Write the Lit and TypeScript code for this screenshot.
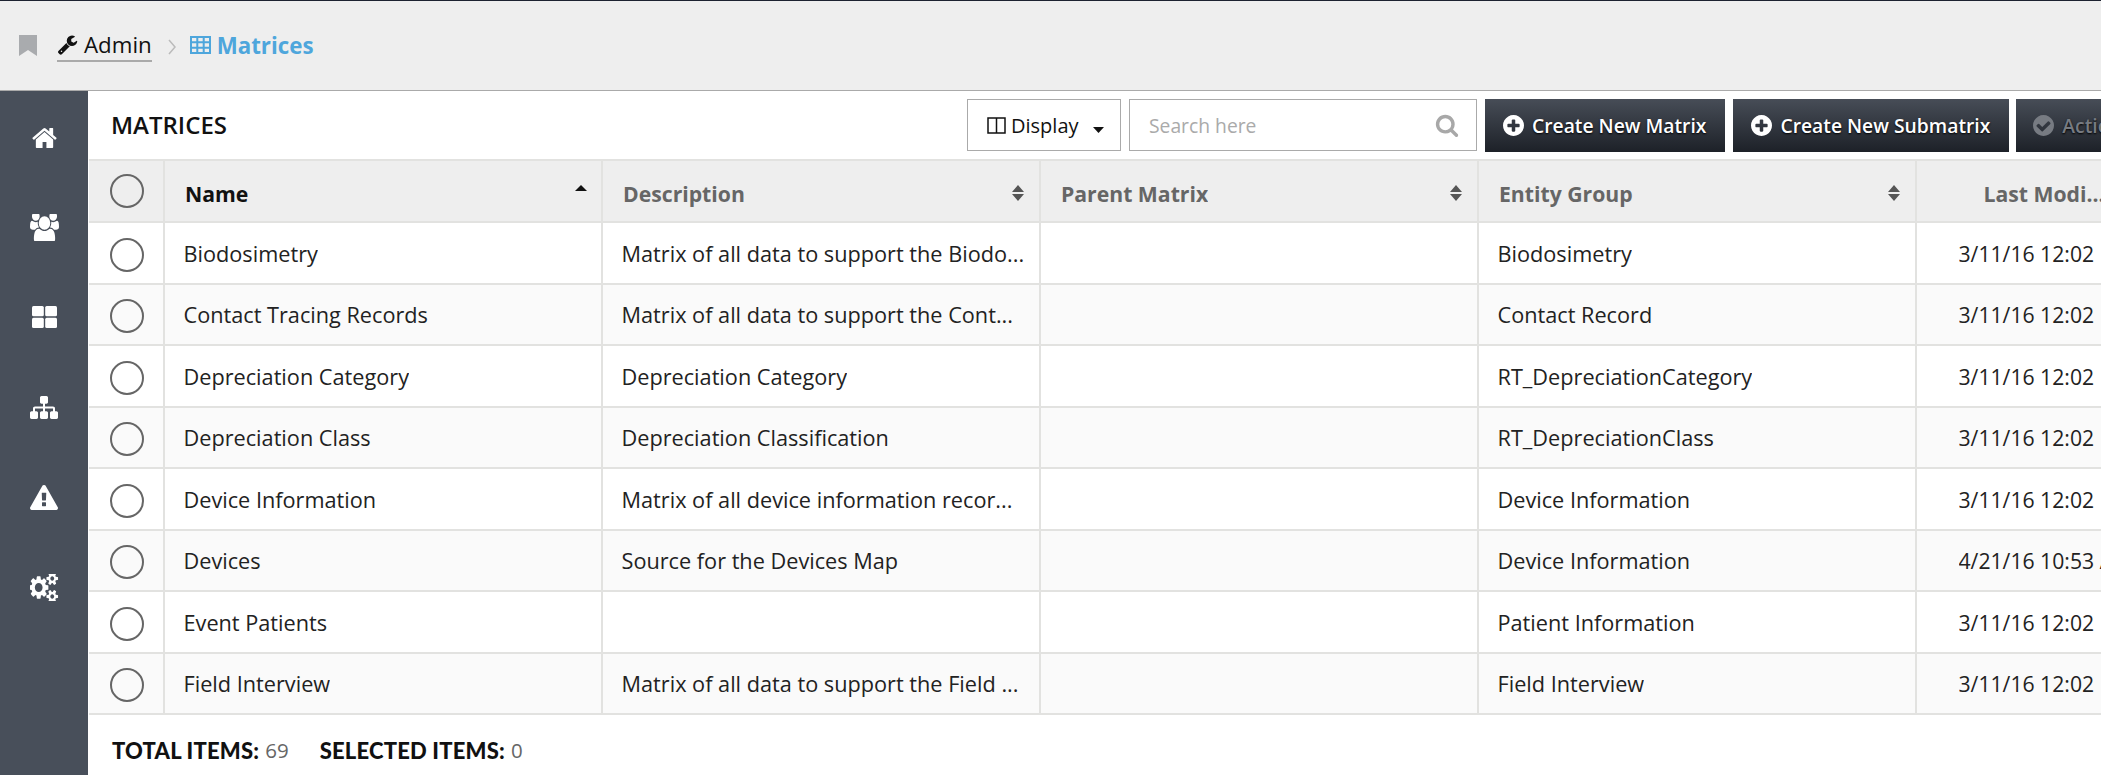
import { LitElement, css, html, svg } from "lit";
import { customElement } from "lit/decorators.js";

type Row = { name: string; desc: string; group: string; modified: string };

const ROWS: Row[] = [
	{ name: "Biodosimetry", desc: "Matrix of all data to support the Biodo...", group: "Biodosimetry", modified: "3/11/16 12:02 PM" },
	{ name: "Contact Tracing Records", desc: "Matrix of all data to support the Cont...", group: "Contact Record", modified: "3/11/16 12:02 PM" },
	{ name: "Depreciation Category", desc: "Depreciation Category", group: "RT_DepreciationCategory", modified: "3/11/16 12:02 PM" },
	{ name: "Depreciation Class", desc: "Depreciation Classification", group: "RT_DepreciationClass", modified: "3/11/16 12:02 PM" },
	{ name: "Device Information", desc: "Matrix of all device information recor...", group: "Device Information", modified: "3/11/16 12:02 PM" },
	{ name: "Devices", desc: "Source for the Devices Map", group: "Device Information", modified: "4/21/16 10:53 AM" },
	{ name: "Event Patients", desc: "", group: "Patient Information", modified: "3/11/16 12:02 PM" },
	{ name: "Field Interview", desc: "Matrix of all data to support the Field ...", group: "Field Interview", modified: "3/11/16 12:02 PM" },
];

const fa = (d: string) => svg`<path d=${d}></path>`;

const WRENCH = fa("M448 1472q0-26-19-45t-45-19-45 19-19 45 19 45 45 19 45-19 19-45zm644-420l-682 682q-37 37-90 37-52 0-91-37l-106-108q-38-36-38-90 0-53 38-91l681-681q39 98 114.500 173.500t173.500 114.500zm634-435q0 39-23 106-47 134-164.500 217.500t-258.500 83.500q-185 0-316.500-131.500t-131.500-316.500 131.500-316.500 316.500-131.500q58 0 121.500 16.500t107.500 46.500q16 11 16 28t-16 28l-293 169v224l193 107q5-3 79-48.500t135.500-81 70.500-35.500q15 0 23.500 10t8.500 25z");
const SEARCH = fa("M1216 832q0-185-131.500-316.500t-316.500-131.500-316.500 131.500-131.500 316.500 131.500 316.500 316.500 131.500 316.500-131.500 131.500-316.500zm512 832q0 52-38 90t-90 38q-54 0-90-38l-343-342q-179 124-399 124-143 0-273.500-55.500t-225-150-150-225-55.500-273.500 55.500-273.500 150-225 225-150 273.500-55.500 273.500 55.500 225 150 150 225 55.500 273.500q0 220-124 399l343 343q37 37 37 90z");
const PLUS = fa("M1344 960v-128q0-26-19-45t-45-19h-256v-256q0-26-19-45t-45-19h-128q-26 0-45 19t-19 45v256h-256q-26 0-45 19t-19 45v128q0 26 19 45t45 19h256v256q0 26 19 45t45 19h128q26 0 45-19t19-45v-256h256q26 0 45-19t19-45zm320-64q0 209-103 385.500t-279.500 279.500-385.500 103-385.500-103-279.500-279.500-103-385.500 103-385.500 279.500-279.500 385.500-103 385.500 103 279.500 279.500 103 385.500z");
const CHECK = fa("M1412 734q0-28-18-46l-91-90q-19-19-45-19t-45 19l-408 407-226-226q-19-19-45-19t-45 19l-91 90q-18 18-18 46 0 27 18 45l362 362q19 19 45 19 27 0 46-19l543-543q18-18 18-45zm252 162q0 209-103 385.500t-279.500 279.500-385.500 103-385.500-103-279.500-279.500-103-385.500 103-385.500 279.500-279.500 385.500-103 385.500 103 279.500 279.500 103 385.500z");
const HOME = fa("M1472 992v480q0 26-19 45t-45 19h-384v-384h-256v384h-384q-26 0-45-19t-19-45v-480q0-1 .5-3t.5-3l575-474 575 474q1 2 1 6zm223-69l-62 74q-8 9-21 11h-3q-13 0-21-7l-692-577-692 577q-12 8-24 7-13-2-21-11l-62-74q-8-10-7-23.500t11-21.500l719-599q32-26 76-26t76 26l244 204v-195q0-14 9-23t23-9h192q14 0 23 9t9 23v408l219 182q10 8 11 21.500t-7 23.500z");
const USERS = fa("M593 896q-162 5-265 128h-134q-82 0-138-40.500t-56-118.500q0-353 124-353 6 0 43.500 21t97.500 42.500 119 21.500q67 0 133-23-5 37-5 66 0 139 81 256zm1071 637q0 120-73 189.500t-194 69.500h-874q-121 0-194-69.500t-73-189.500q0-53 3.500-103.500t14-109 26.500-108.500 43-97.500 62-81 85.500-53.500 111.500-20q10 0 43 21.500t73 48 107 48 135 21.500 135-21.500 107-48 73-48 43-21.500q61 0 111.500 20t85.500 53.500 62 81 43 97.500 26.500 108.500 14 109 3.500 103.500zm-1024-1277q0 106-75 181t-181 75-181-75-75-181 75-181 181-75 181 75 75 181zm704 384q0 159-112.500 271.500t-271.500 112.500-271.500-112.500-112.500-271.500 112.500-271.500 271.500-112.500 271.500 112.500 112.500 271.500zm576 225q0 78-56 118.500t-138 40.500h-134q-103-123-265-128 81-117 81-256 0-29-5-66 66 23 133 23 59 0 119-21.500t97.500-42.500 43.500-21q124 0 124 353zm-128-609q0 106-75 181t-181 75-181-75-75-181 75-181 181-75 181 75 75 181z");
const SITEMAP = fa("M1792 1248v320q0 40-28 68t-68 28h-320q-40 0-68-28t-28-68v-320q0-40 28-68t68-28h96v-192h-512v192h96q40 0 68 28t28 68v320q0 40-28 68t-68 28h-320q-40 0-68-28t-28-68v-320q0-40 28-68t68-28h96v-192h-512v192h96q40 0 68 28t28 68v320q0 40-28 68t-68 28h-320q-40 0-68-28t-28-68v-320q0-40 28-68t68-28h96v-192q0-52 38-90t90-38h512v-192h-96q-40 0-68-28t-28-68v-320q0-40 28-68t68-28h320q40 0 68 28t28 68v320q0 40-28 68t-68 28h-96v192h512q52 0 90 38t38 90v192h96q40 0 68 28t28 68z");
const WARNING = fa("M1024 1375v-190q0-14-9.500-23.500t-22.500-9.500h-192q-13 0-22.500 9.500t-9.500 23.500v190q0 14 9.500 23.500t22.500 9.500h192q13 0 22.500-9.500t9.500-23.500zm-2-374l18-459q0-12-10-19-13-11-24-11h-220q-11 0-24 11-10 7-10 21l17 457q0 10 10 16.500t24 6.500h185q14 0 23.500-6.500t10.500-16.500zm-14-934l768 1408q35 63-2 126-17 29-46.500 46t-63.500 17h-1536q-34 0-63.500-17t-46.500-46q-37-63-2-126l768-1408q17-31 47-49t65-18 65 18 47 49z");
const COGS = fa("M832 896q0-106-75-181t-181-75-181 75-75 181 75 181 181 75 181-75 75-181zm768 512q0-52-38-90t-90-38-90 38-38 90q0 53 37.500 90.500t90.500 37.500 90.500-37.500 37.500-90.500zm0-1024q0-52-38-90t-90-38-90 38-38 90q0 53 37.500 90.500t90.500 37.500 90.500-37.500 37.500-90.500zm-384 421v185q0 10-7 19.500t-16 10.500l-155 24q-11 35-32 76 34 48 90 115 7 11 7 20 0 12-7 19-23 30-82.500 89.500t-78.500 59.500q-11 0-21-7l-115-90q-37 19-77 31-11 108-23 155-7 24-30 24h-186q-11 0-20-7.500t-10-17.500l-23-153q-34-10-75-31l-118 89q-7 7-20 7-11 0-21-8-144-133-144-160 0-9 7-19 10-14 41-53t47-61q-23-44-35-82l-152-24q-10-1-17-9.500t-7-19.500v-185q0-10 7-19.500t16-10.500l155-24q11-35 32-76-34-48-90-115-7-11-7-20 0-12 7-20 22-30 82-89t79-59q11 0 21 7l115 90q34-18 77-32 11-108 23-154 7-24 30-24h186q11 0 20 7.500t10 17.500l23 153q34 10 75 31l118-89q8-7 20-7 11 0 21 8 144 133 144 160 0 8-7 19-12 16-42 54t-45 60q23 48 34 82l152 23q10 2 17 10.500t7 19.500zm640 533v140q0 16-149 31-12 27-30 52 51 113 51 138 0 4-4 7-122 71-124 71-8 0-46-47t-52-68q-20 2-30 2t-30-2q-14 21-52 68t-46 47q-2 0-124-71-4-3-4-7 0-25 51-138-18-25-30-52-149-15-149-31v-140q0-16 149-31 13-29 30-52-51-113-51-138 0-4 4-7 4-2 35-20t59-34 30-16q8 0 46 46.500t52 67.500q20-2 30-2t30 2q51-71 92-112l6-2q4 0 124 70 4 3 4 7 0 25-51 138 17 23 30 52 149 15 149 31zm0-1024v140q0 16-149 31-12 27-30 52 51 113 51 138 0 4-4 7-122 71-124 71-8 0-46-47t-52-68q-20 2-30 2t-30-2q-14 21-52 68t-46 47q-2 0-124-71-4-3-4-7 0-25 51-138-18-25-30-52-149-15-149-31v-140q0-16 149-31 13-29 30-52-51-113-51-138 0-4 4-7 4-2 35-20t59-34 30-16q8 0 46 46.500t52 67.500q20-2 30-2t30 2q51-71 92-112l6-2q4 0 124 70 4 3 4 7 0 25-51 138 17 23 30 52 149 15 149 31z");

const NAV = [
	html`<svg width="25" height="21" viewBox="64 190 1664 1346" preserveAspectRatio="none" fill="currentColor">${HOME}</svg>`,
	html`<svg width="29" height="27" viewBox="0 128 1920 1536" preserveAspectRatio="none" fill="currentColor">${USERS}</svg>`,
	html`<svg width="25" height="22" viewBox="0 0 25 22" fill="currentColor">
		<rect width="11.800" height="10.300" rx="1.500"/><rect x="13.200" width="11.800" height="10.300" rx="1.500"/>
		<rect y="11.700" width="11.800" height="10.300" rx="1.500"/><rect x="13.200" y="11.700" width="11.800" height="10.300" rx="1.500"/>
	</svg>`,
	html`<svg width="28" height="23" viewBox="0 128 1792 1536" preserveAspectRatio="none" fill="currentColor">${SITEMAP}</svg>`,
	html`<svg width="28" height="25" viewBox="0 0 1792 1664" preserveAspectRatio="none" fill="currentColor">${WARNING}</svg>`,
	html`<svg width="29" height="27" viewBox="0 128 1920 1536" preserveAspectRatio="none" fill="currentColor">${COGS}</svg>`,
];

@customElement("app-root")
export class AppRoot extends LitElement {
	static override styles = css`
		:host {
			display: block;
			width: 2101px;
			height: 775px;
			overflow: hidden;
			background: #fff;
			font-family: "Open Sans", sans-serif;
			color: #222;
		}

		.crumbs {
			height: 88px;
			box-sizing: content-box;
			background: #eee;
			border-top: 1px solid #1c2230;
			border-bottom: 1px solid #aaa;
			display: flex;
			align-items: center;
			padding: 0 0 1px 19px;
			font-size: 22.300px;
		}
		.bookmark { color: #a9abae; margin-right: 20px; display: block; }
		.admin {
			display: flex;
			align-items: center;
			gap: 6px;
			color: #111;
			height: 30px;
			border-bottom: 2px solid #aaa;
			margin-top: 1px;
		}
		.chev { margin: 3px 14px 0 16px; color: #bbb; display: block; }
		.current { display: flex; align-items: center; gap: 6px; color: #4ea6dc; font-weight: 700; }

		.body { display: flex; height: 684px; }
		.side { width: 88px; flex: none; background: #484f5a; color: #fff; padding-top: 1px; box-sizing: border-box; }
		.side a { height: 90px; display: flex; align-items: center; justify-content: center; }

		.main { flex: 1; min-width: 0; padding-left: 1px; overflow: hidden; }
		.toolbar { height: 68px; display: flex; align-items: center; white-space: nowrap; padding-left: 22px; }
		.title { width: 856px; flex: none; font-size: 24px; font-weight: 600; color: #111; margin-top: -2px; }
		.display {
			width: 154px;
			height: 52px;
			box-sizing: border-box;
			flex: none;
			border: 1px solid #aaa;
			display: flex;
			align-items: center;
			padding-left: 19px;
			font-size: 20px;
			color: #111;
		}
		.display .col { margin-right: 5px; display: block; }
		.display .caret { margin: 9px 0 0 14px; display: block; }
		.search {
			width: 348px;
			height: 52px;
			box-sizing: border-box;
			flex: none;
			margin-left: 8px;
			border: 1px solid #aaa;
			display: flex;
			align-items: center;
			justify-content: space-between;
			padding: 0 17px 0 19px;
			font-size: 19.300px;
			color: #aaa;
		}
		.search svg { color: #a8a8a8; display: block; }
		.btn {
			height: 53px;
			box-sizing: border-box;
			flex: none;
			margin-left: 8px;
			display: flex;
			align-items: center;
			gap: 8px;
			padding: 0 19px 0 18px;
			background: linear-gradient(#474d57, #1d2128);
			color: #fff;
			font-size: 19.300px;
			font-weight: 600;
			text-shadow: 0 1px 2px #000;
		}
		.btn svg { display: block; }
		.btn.off { color: #777b82; padding-left: 17px; width: 150px; margin-left: 7px; }

		.grid { display: grid; grid-template-columns: 75.500px repeat(4, 438px) 300px; }
		.cell {
			height: 61.500px;
			box-sizing: border-box;
			border-bottom: 2px solid #e2e2e0;
			border-right: 2px solid #e2e2e0;
			display: flex;
			align-items: center;
			padding: 1px 5px 0 19px;
			font-size: 21.700px;
			min-width: 0;
		}
		.cell span { white-space: nowrap; overflow: hidden; }
		.even { background: #fafafa; }
		.cell.check { padding: 4px 0 0 21px; }
		.cell.last { padding-left: 42px; border-right: 0; font-size: 21.200px; }
		.head {
			height: 64px;
			background: #eee;
			border-top: 2px solid #e2e2e0;
			font-weight: 700;
			font-size: 21.200px;
			color: #666;
			justify-content: space-between;
			padding: 4px 14px 0 20.500px;
		}
		.head.check { padding: 0 0 0 21px; }
		.head.last { padding-left: 67px; border-right: 0; }
		.head.active { color: #111; }
		.head svg { display: block; }
		.radio { width: 34px; height: 34px; box-sizing: border-box; border: 2px solid #666; border-radius: 50%; }

		.foot { height: 60px; box-sizing: border-box; padding: 10px 0 0 23px; display: flex; align-items: center; font-size: 20.500px; color: #666; }
		.foot b { color: #111; font-family: Lato, sans-serif; font-size: 22px; font-weight: 900; letter-spacing: 0.200px; margin-right: 6px; }
		.foot .sel { margin-left: 31px; }
	`;

	private sortIcon(active: boolean) {
		return active
			? html`<svg width="12" height="16" viewBox="0 0 12 16"><path fill="#111" d="M6 0l6 6H0z"/></svg>`
			: html`<svg width="14" height="16" viewBox="0 0 14 16"><path fill="#555" d="M7 0l6 7H1zM1 9h12l-6 7z"/></svg>`;
	}

	override render() {
		return html`
			<div class="crumbs">
				<svg class="bookmark" width="18" height="21" viewBox="0 0 18 21"><path fill="currentColor" d="M0 0h18v21l-9-6-9 6z"/></svg>
				<div class="admin">
					<svg width="21" height="21" viewBox="0 0 1792 1792" fill="currentColor">${WRENCH}</svg>
					Admin
				</div>
				<svg class="chev" width="8" height="16" viewBox="0 0 8 16"><path fill="none" stroke="currentColor" stroke-width="1.500" d="M1 1l6 7-6 7"/></svg>
				<div class="current">
					<svg width="21" height="18" viewBox="0 0 21 18"><path fill="none" stroke="currentColor" stroke-width="2" d="M1 1h19v16H1zM1 6.300h19M1 11.700h19M7.300 1v16M13.700 1v16"/></svg>
					Matrices
				</div>
			</div>
			<div class="body">
				<nav class="side">${NAV.map((icon) => html`<a>${icon}</a>`)}</nav>
				<div class="main">
					<div class="toolbar">
						<div class="title">MATRICES</div>
						<div class="display">
							<svg class="col" width="19" height="17" viewBox="0 0 19 17"><path fill="none" stroke="#111" stroke-width="1.500" d="M1 1h17v15H1zM9.500 1v15"/></svg>
							Display
							<svg class="caret" width="11" height="6" viewBox="0 0 11 6"><path fill="#111" d="M0 0h11L5.500 6z"/></svg>
						</div>
						<div class="search">
							Search here
							<svg width="24" height="24" viewBox="0 0 1792 1792" fill="currentColor">${SEARCH}</svg>
						</div>
						<div class="btn">
							<svg width="21" height="21" viewBox="128 128 1536 1536" fill="#fff">${PLUS}</svg>
							Create New Matrix
						</div>
						<div class="btn">
							<svg width="21" height="21" viewBox="128 128 1536 1536" fill="#fff">${PLUS}</svg>
							Create New Submatrix
						</div>
						<div class="btn off">
							<svg width="21" height="21" viewBox="128 128 1536 1536" fill="currentColor">${CHECK}</svg>
							Actions
						</div>
					</div>
					<div class="grid">
						<div class="cell head check"><div class="radio"></div></div>
						<div class="cell head active"><span>Name</span>${this.sortIcon(true)}</div>
						<div class="cell head"><span>Description</span>${this.sortIcon(false)}</div>
						<div class="cell head"><span>Parent Matrix</span>${this.sortIcon(false)}</div>
						<div class="cell head"><span>Entity Group</span>${this.sortIcon(false)}</div>
						<div class="cell head last"><span>Last Modi...</span></div>
						${ROWS.map((r, i) => {
							const z = i % 2 ? "even" : "";
							return html`
								<div class="cell check ${z}"><div class="radio"></div></div>
								<div class="cell ${z}"><span>${r.name}</span></div>
								<div class="cell ${z}"><span>${r.desc}</span></div>
								<div class="cell ${z}"></div>
								<div class="cell ${z}"><span>${r.group}</span></div>
								<div class="cell last ${z}"><span>${r.modified}</span></div>
							`;
						})}
					</div>
					<div class="foot">
						<b>TOTAL ITEMS:</b>69
						<b class="sel">SELECTED ITEMS:</b>0
					</div>
				</div>
			</div>
		`;
	}
}
